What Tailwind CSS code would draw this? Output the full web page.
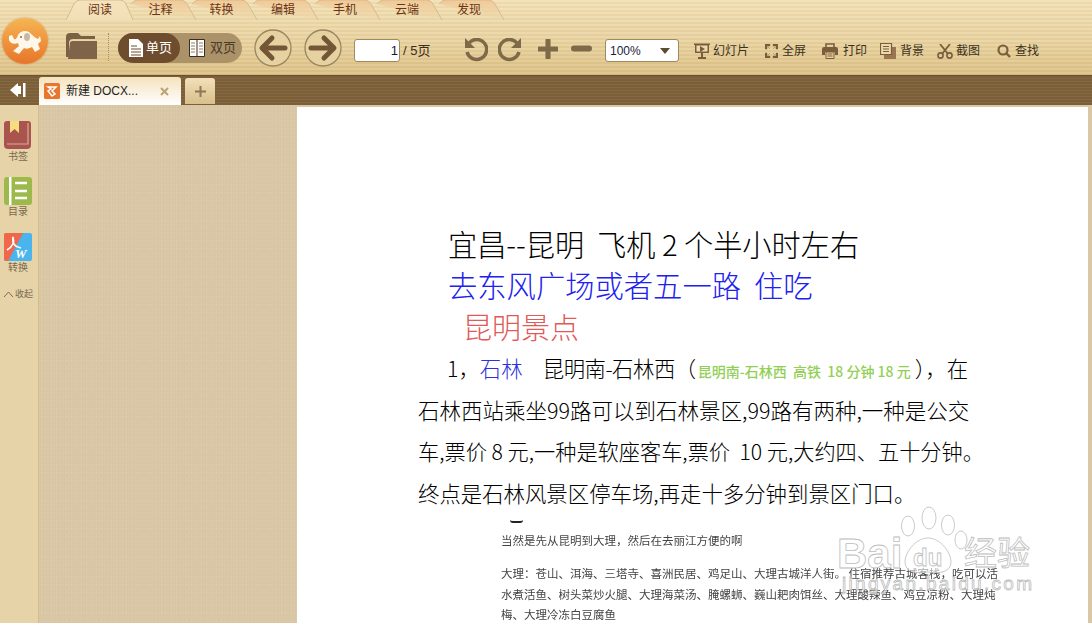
<!DOCTYPE html>
<html lang="zh"><head><meta charset="utf-8"><script src="https://cdn.jsdelivr.net/npm/@tailwindcss/browser@4"></script></head>
<body class="w-[1092px] h-[623px] overflow-hidden bg-[#d9c7a5] font-['Liberation_Sans','Noto_Sans_CJK_SC',sans-serif]">
<div class="relative h-[623px] flex flex-col overflow-hidden">

<!-- toolbar -->
<div class="h-[75px] shrink-0 flex flex-col bg-[repeating-linear-gradient(180deg,rgba(255,255,255,0.10)_0px,rgba(255,255,255,0.10)_2px,rgba(160,110,40,0.05)_2px,rgba(160,110,40,0.05)_4px),linear-gradient(180deg,#f2e0b5_0%,#e8d29f_55%,#dcc185_100%)] border-b border-[#cfb67f]">
  <div class="h-[21px] pl-[66px] flex text-[12px] text-[#6b3413] leading-[21px]">
    <div class="relative w-[68px] text-center"><svg class="absolute left-0 top-0" width="68" height="21"><defs><linearGradient id="a" x1="0" y1="0" x2="0" y2="1"><stop offset="0" stop-color="#f6e3bd"/><stop offset="1" stop-color="#f0dfb7"/></linearGradient><linearGradient id="b" x1="0" y1="0" x2="0" y2="1"><stop offset="0" stop-color="#f3c796"/><stop offset="1" stop-color="#ecd8a9" stop-opacity="0.3"/></linearGradient></defs><path d="M0 20 L8 4 Q10 0 14 0 L54 0 Q58 0 60 4 L67 20" fill="url(#a)" stroke="#d4bd8e"/></svg><span class="relative">阅读</span></div>
    <div class="relative w-[61px] -ml-[4px] text-center"><svg class="absolute left-0 top-0" width="68" height="21"><path d="M1 4 Q4 0 8 0 L50 0 Q55 0 57 4 L66 20" fill="url(#b)" stroke="#d4bd8e"/></svg><span class="relative">注释</span></div>
    <div class="relative w-[61px] text-center"><svg class="absolute left-0 top-0" width="68" height="21"><path d="M1 4 Q4 0 8 0 L50 0 Q55 0 57 4 L66 20" fill="url(#b)" stroke="#d4bd8e"/></svg><span class="relative">转换</span></div>
    <div class="relative w-[62px] text-center"><svg class="absolute left-0 top-0" width="68" height="21"><path d="M1 4 Q4 0 8 0 L50 0 Q55 0 57 4 L66 20" fill="url(#b)" stroke="#d4bd8e"/></svg><span class="relative">编辑</span></div>
    <div class="relative w-[62px] text-center"><svg class="absolute left-0 top-0" width="68" height="21"><path d="M1 4 Q4 0 8 0 L50 0 Q55 0 57 4 L66 20" fill="url(#b)" stroke="#d4bd8e"/></svg><span class="relative">手机</span></div>
    <div class="relative w-[62px] text-center"><svg class="absolute left-0 top-0" width="68" height="21"><path d="M1 4 Q4 0 8 0 L50 0 Q55 0 57 4 L66 20" fill="url(#b)" stroke="#d4bd8e"/></svg><span class="relative">云端</span></div>
    <div class="relative w-[62px] text-center"><svg class="absolute left-0 top-0" width="68" height="21"><path d="M1 4 Q4 0 8 0 L50 0 Q55 0 57 4 L66 20" fill="url(#b)" stroke="#d4bd8e"/></svg><span class="relative">发现</span></div>
  </div>

  <div class="flex-1 flex items-center relative">
    <!-- logo -->
    <div class="absolute left-[2px] top-[-3px] w-[46px] h-[46px] rounded-full bg-[linear-gradient(180deg,#f6b552,#e8752a)] shadow-[0_0_2px_#b98a4a]">
      <svg width="46" height="46" viewBox="0 0 46 46"><path d="M7 18 L10 17 L12 21 C14 22 15 20 16 17 C19 12 26 12 29 16 C32 18 33 20 36 21 L38 18 L39 23 L36 26 L38 31 L33 34 L30 29 C26 31 24 31 22 30 L17 36 L11 33 L17 28 L16 25 C12 27 8 25 7 22 Z" fill="#fff8ea"/><ellipse cx="25" cy="19" rx="3" ry="4" fill="#c9b9a4"/><circle cx="19" cy="19" r="1" fill="#a85c20"/></svg>
    </div>
    <!-- folder -->
    <svg class="absolute left-[65px] top-[11px]" width="33" height="28" viewBox="0 0 33 28"><path d="M1 25 V5 Q1 1 5 1 H13 L16 4 H30 V7 H8 Q4 7 4 11 V25 Z" fill="#7a6044"/><path d="M3 27 L5 11 Q5 9 8 9 H32 V27 Z" fill="#80644a"/></svg>
    <div class="absolute left-[108px] top-[12px] h-[28px] border-l border-dotted border-[#a68d62]"></div>
    <!-- view toggle -->
    <div class="absolute left-[118px] top-[12px] w-[124px] h-[30px] rounded-full bg-[#ab9269] flex text-[13px] leading-[30px]">
      <div class="w-[62px] h-[30px] rounded-full bg-[#6e4d2f] text-white flex items-center pl-[10px] gap-[2px]">
        <svg width="16" height="18" viewBox="0 0 16 18"><path d="M1 0 H10 L15 5 V18 H1 Z" fill="#fff"/><path d="M3 7 H9 M3 10 H13 M3 13 H13 M3 16 H13" stroke="#6e4d2f"/></svg><span>单页</span></div>
      <div class="flex-1 flex items-center pl-[9px] gap-[4px] text-[#4a3a26]">
        <svg width="16" height="18" viewBox="0 0 16 18"><path d="M.5 .5 H15.5 V17.5 H.5 Z M8 .5 V17.5" fill="#fff" stroke="#3c2d1c"/><path d="M2 4 H6 M2 7 H6 M2 10 H6 M2 13 H6 M10 4 H14 M10 7 H14 M10 10 H14 M10 13 H14" stroke="#8f7a5c"/></svg><span class="ml-[1px]">双页</span></div>
    </div>
    <!-- nav -->
    <svg class="absolute left-[254px] top-[8px]" width="38" height="38" viewBox="0 0 38 38"><circle cx="19" cy="19" r="18" fill="#e6d1a0" stroke="#9a8560" stroke-width="1.3"/><path d="M18 9 L8 19 L18 29 M9 19 H31" fill="none" stroke="#735636" stroke-width="5" stroke-linejoin="round" stroke-linecap="round"/></svg>
    <svg class="absolute left-[304px] top-[8px]" width="38" height="38" viewBox="0 0 38 38"><circle cx="19" cy="19" r="18" fill="#e6d1a0" stroke="#9a8560" stroke-width="1.3"/><path d="M20 9 L30 19 L20 29 M7 19 H29" fill="none" stroke="#735636" stroke-width="5" stroke-linejoin="round" stroke-linecap="round"/></svg>
    <!-- page -->
    <div class="absolute left-[354px] top-[18px] w-[46px] h-[23px] bg-white border border-[#a08a60] rounded-[3px] text-right pr-[1px] text-[13px] leading-[22px] text-[#1a1a40]">1</div>
    <div class="absolute left-[403px] top-[19px] text-[13px] leading-[22px] text-[#3a2c1a]">/ 5页</div>
    <!-- undo redo -->
    <svg class="absolute left-[464px] top-[17px]" width="24" height="24" viewBox="0 0 24 24"><path d="M5 5 A10 10 0 1 1 3 14" fill="none" stroke="#7e6a49" stroke-width="3.5"/><path d="M1 0 L1 10 L11 10 Z" fill="#7e6a49"/></svg>
    <svg class="absolute left-[498px] top-[17px]" width="24" height="24" viewBox="0 0 24 24"><path d="M19 5 A10 10 0 1 0 21 14" fill="none" stroke="#7e6a49" stroke-width="3.5"/><path d="M23 0 L23 10 L13 10 Z" fill="#7e6a49"/></svg>
    <svg class="absolute left-[538px] top-[18px]" width="20" height="20" viewBox="0 0 20 20"><path d="M0 10 H20 M10 0 V20" stroke="#7e6a49" stroke-width="6" stroke-linecap="round" transform="translate(1.5 1.5) scale(.85)"/></svg>
    <svg class="absolute left-[571px] top-[24px]" width="21" height="7"><rect width="21" height="6" y=".5" rx="3" fill="#7e6a49"/></svg>
    <!-- zoom select -->
    <div class="absolute left-[605px] top-[18px] w-[74px] h-[23px] bg-white border border-[#a08a60] rounded-[3px] flex items-center justify-between pl-[4px] pr-[8px] text-[12px] text-[#1a2440]"><span>100%</span><svg width="10" height="6"><path d="M0 0 H10 L5 6 Z" fill="#5e4a2e"/></svg></div>
    <!-- tools -->
    <div class="absolute left-[694px] top-[20px] flex items-center gap-[3px] text-[12px] leading-[20px] text-[#3b3020]">
      <svg width="16" height="16" viewBox="0 0 16 16"><path d="M0 .5 H16 V2 H15 V10 H1 V2 H0 Z" fill="#7a5e3c"/><rect x="2.5" y="2.5" width="11" height="6" fill="#ecd9ac"/><path d="M6 3 L11 6 L6 9 Z" fill="#7a5e3c"/><path d="M8 10 V14 M4 15 H12" stroke="#7a5e3c" stroke-width="2"/></svg><span>幻灯片</span>
    </div>
    <div class="absolute left-[765px] top-[20px] flex items-center gap-[4px] text-[12px] leading-[20px] text-[#3b3020]">
      <svg width="13" height="14" viewBox="0 0 13 14"><path d="M0 0 H5 V2 H2 V5 H0 Z M8 0 H13 V5 H11 V2 H8 Z M0 9 H2 V12 H5 V14 H0 Z M11 9 H13 V14 H8 V12 H11 Z M3 3 L5 5 M10 3 L8 5 M3 11 L5 9 M10 11 L8 9" fill="#7a5e3c" stroke="#7a5e3c" stroke-width=".4"/></svg><span>全屏</span>
    </div>
    <div class="absolute left-[822px] top-[20px] flex items-center gap-[5px] text-[12px] leading-[20px] text-[#3b3020]">
      <svg width="16" height="16" viewBox="0 0 16 16"><path d="M4 4 V1 H12 V4" fill="none" stroke="#7a5e3c" stroke-width="1.6"/><path d="M2 4 H14 Q16 4 16 6 V12 H13 V9 H3 V12 H0 V6 Q0 4 2 4 Z" fill="#7a5e3c"/><path d="M4 9 H12 V15.5 H4 Z" fill="#e8d29f" stroke="#7a5e3c"/><path d="M5.5 11 H10.5 M5.5 13 H10.5" stroke="#7a5e3c"/></svg><span>打印</span>
    </div>
    <div class="absolute left-[880px] top-[20px] flex items-center gap-[4px] text-[12px] leading-[20px] text-[#3b3020]">
      <svg width="16" height="16" viewBox="0 0 16 16"><path d="M4 4 H16 V16 H4 Z" fill="#9a7650"/><path d="M.5 .5 H11.5 V11.5 H.5 Z" fill="#ecd9ac" stroke="#7a5e3c" stroke-width="1.2"/><path d="M3 3.5 H9 M3 6 H9 M3 8.5 H9" stroke="#7a5e3c"/></svg><span>背景</span>
    </div>
    <div class="absolute left-[937px] top-[20px] flex items-center gap-[3px] text-[12px] leading-[20px] text-[#3b3020]">
      <svg width="16" height="15" viewBox="0 0 16 15"><path d="M3 0 L11 10 M13 0 L5 10" stroke="#7a5e3c" stroke-width="1.8"/><circle cx="3.5" cy="11.5" r="2.6" fill="none" stroke="#7a5e3c" stroke-width="1.6"/><circle cx="12.5" cy="11.5" r="2.6" fill="none" stroke="#7a5e3c" stroke-width="1.6"/></svg><span>截图</span>
    </div>
    <div class="absolute left-[997px] top-[20px] flex items-center gap-[4px] text-[12px] leading-[20px] text-[#3b3020]">
      <svg width="14" height="14" viewBox="0 0 14 14"><circle cx="6" cy="6" r="4.5" fill="none" stroke="#7a5e3c" stroke-width="2.2"/><path d="M9 9 L13 13" stroke="#7a5e3c" stroke-width="2.4"/></svg><span>查找</span>
    </div>
  </div>
</div>

<!-- tab bar -->
<div class="h-[30px] shrink-0 flex items-end bg-[repeating-linear-gradient(180deg,#7b5f3b_0px,#7b5f3b_2px,#86693f_2px,#86693f_3px)] border-t border-[#6c4f2c] relative">
  <svg class="absolute left-[10px] top-[7px]" width="16" height="14" viewBox="0 0 16 14"><path d="M0 7 L8 0 V3 H11 V11 H8 V14 Z" fill="#fff"/><rect x="13" y="0" width="2.5" height="14" fill="#fff"/></svg>
  <div class="ml-[39px] w-[142px] h-[28px] rounded-t-[3px] bg-[linear-gradient(180deg,#f4e2bd,#ffffff)] flex items-center pl-[5px] text-[12px] text-[#1d1d1d]">
    <svg width="16" height="16" viewBox="0 0 16 16"><rect width="16" height="16" rx="1.5" fill="#e9762c"/><path d="M4 4 H12 L8 8 L11 11 L8 13 L4 8 L7 6 Z" fill="none" stroke="#fff" stroke-width="1.5"/></svg>
    <span class="ml-[6px] w-[88px] whitespace-nowrap">新建 DOCX...</span>
    <svg class="ml-[6px]" width="9" height="9"><path d="M1 1 L8 8 M8 1 L1 8" stroke="#bda274" stroke-width="2"/></svg>
  </div>
  <div class="ml-[4px] mb-[1px] w-[30px] h-[26px] rounded-t-[3px] bg-[linear-gradient(180deg,#f2e0b8,#d8bf8b)] flex items-center justify-center">
    <svg width="11" height="11"><path d="M5.5 0 V11 M0 5.5 H11" stroke="#8e7755" stroke-width="2"/></svg>
  </div>
</div>

<!-- body -->
<div class="flex-1 flex min-h-0 bg-[#d9c7a5]">
  <div class="w-[39px] shrink-0 bg-[#e6d3a8] border-r border-[#d8bd80] flex flex-col items-start pl-[4px] pt-[16px] text-[10px] leading-[12px] text-[#7a6a50]">
    <svg width="28" height="29" viewBox="0 0 28 29"><path d="M3 0 H24 Q27 0 27 3 V24 Q27 28 23 28 H4 Q0 28 0 24 V3 Q0 0 3 0 Z" fill="#a9554e"/><path d="M3 23 H24 V2" fill="none" stroke="#dba8a0" stroke-width="1.2"/><path d="M6 0 H15 V12 L10.5 8 L6 12 Z" fill="#f7dd80"/></svg>
    <span class="mt-[1px] ml-[4px]">书签</span>
    <svg class="mt-[14px]" width="28" height="28" viewBox="0 0 28 28"><rect width="28" height="28" rx="3" fill="#9cba4b"/><rect x="5" y="0" width="2.5" height="28" fill="#fff"/><path d="M11 6 H23 M11 14 H23 M11 21 H23" stroke="#fff" stroke-width="2.6"/></svg>
    <span class="mt-[1px] ml-[4px]">目录</span>
    <svg class="mt-[15px]" width="28" height="28" viewBox="0 0 28 28"><rect width="28" height="28" rx="2" fill="#4ab4ec"/><path d="M0 2 Q0 0 2 0 H19 L4 28 H2 Q0 28 0 26 Z" fill="#f0674a"/><path d="M3 17 C8 14 11 10 9 4 C8 10 11 14 17 15" fill="none" stroke="#fff" stroke-width="1.6"/><text x="11" y="25" font-size="13" font-weight="700" font-style="italic" fill="#fff" font-family="Liberation Serif">W</text></svg>
    <span class="mt-[1px] ml-[4px]">转换</span>
    <div class="mt-[14px] -ml-[1px] flex items-center text-[9px] whitespace-nowrap"><svg width="11" height="6" class="mr-[1px]"><path d="M1 6 L5.5 1 L10 6" fill="none" stroke="#7a6a50"/></svg>收起</div>
  </div>
  <div class="w-[258px] shrink-0 bg-[radial-gradient(#d5c3a2_0.8px,transparent_1px),radial-gradient(#dccbaf_0.9px,transparent_1px)] bg-[length:3px_4px,5px_7px]"></div>
  <!-- page -->
  <div class="w-[791px] shrink-0 mt-[2px] bg-white text-black overflow-hidden font-['Noto_Sans_CJK_SC',sans-serif]">
    <div class="pt-[116px] pl-[121px] flex flex-col">
      <p class="pl-[30px] text-[29.2px] leading-[41px] h-[41px] whitespace-nowrap font-light">宜昌--昆明&nbsp; 飞机 2 个半小时左右</p>
      <p class="pl-[30px] text-[29.3px] leading-[41px] h-[41px] whitespace-nowrap font-light text-[#2020f0]">去东风广场或者五一路&nbsp; 住吃</p>
      <p class="pl-[45px] text-[29px] leading-[42px] h-[42px] whitespace-nowrap font-light text-[#e05a5a]">昆明景点</p>
      <p class="pl-[29px] text-[21.4px] leading-[41.5px] h-[41.5px] whitespace-nowrap font-light">1，<span class="text-[#3030e0]">石林</span>&nbsp;&nbsp; <span class="ml-[6px] tracking-[-0.5px]">昆明南-石林西（</span><span class="ml-[2px] text-[14px] font-medium text-[#92cf55]">昆明南-石林西&nbsp; 高铁&nbsp; 18 分钟 18 元</span><span class="ml-[4px]">），在</span></p>
      <p class="text-[21.5px] leading-[41.5px] h-[41.5px] whitespace-nowrap font-light">石林西站乘坐99路可以到石林景区,99路有两种,一种是公交</p>
      <p class="text-[21.2px] leading-[41.5px] h-[41.5px] whitespace-nowrap font-light">车,票价 8 元,一种是软座客车,票价&nbsp; 10 元,大约四、五十分钟。</p>
      <p class="text-[21.4px] leading-[41.5px] h-[41.5px] whitespace-nowrap font-light">终点是石林风景区停车场,再走十多分钟到景区门口。</p>
    </div>
    <div class="pl-[204px] pt-[7px] text-[11.5px] text-[#444] blur-[0.35px]">
      <div class="ml-[9px] w-[13px] h-[3px] border-b-2 border-[#222] rounded-b-full"></div>
      <p class="mt-[7px] leading-[20px]">当然是先从昆明到大理，然后在去丽江方便的啊</p>
      <p class="mt-[13px] leading-[20.5px] whitespace-nowrap">大理：苍山、洱海、三塔寺、喜洲民居、鸡足山、大理古城洋人街。 住宿推荐古城客栈，吃可以活<br>水煮活鱼、树头菜炒火腿、大理海菜汤、腌螺蛳、巍山耙肉饵丝、大理酸辣鱼、鸡豆凉粉、大理炖<br>梅、大理冷冻白豆腐鱼</p>
    </div>
  </div>
  <div class="flex-1 bg-[#d9c7a5]"></div>
</div>

<!-- watermark -->
<svg class="absolute left-[810px] top-[500px]" width="230" height="105" viewBox="0 0 230 105">
  <g fill="#fff" fill-opacity=".55" stroke="#bdbdbd" stroke-opacity=".8" stroke-width="1">
    <ellipse cx="98" cy="26" rx="6.5" ry="10"/><ellipse cx="119" cy="18" rx="7" ry="11"/><ellipse cx="138" cy="25" rx="6.5" ry="10"/><ellipse cx="151" cy="40" rx="6" ry="9"/>
    <path d="M118 38 C130 38 141 52 141 62 C141 72 130 74 118 72 C106 74 95 72 95 62 C95 52 106 38 118 38 Z"/>
  </g>
  <g font-family="Liberation Sans" font-weight="700" fill="#fff" fill-opacity=".75" stroke="#bdbdbd" stroke-width=".8">
    <text x="27" y="68" font-size="42">Bai</text><text x="103" y="66" font-size="24">du</text>
    <text x="154" y="65" font-size="33" font-family="Noto Sans CJK SC" font-weight="400">经验</text>
    <text x="32" y="90" font-size="19" font-weight="400" textLength="190">jingyan.baidu.com</text>
  </g>
</svg>
</div>
</body></html>
